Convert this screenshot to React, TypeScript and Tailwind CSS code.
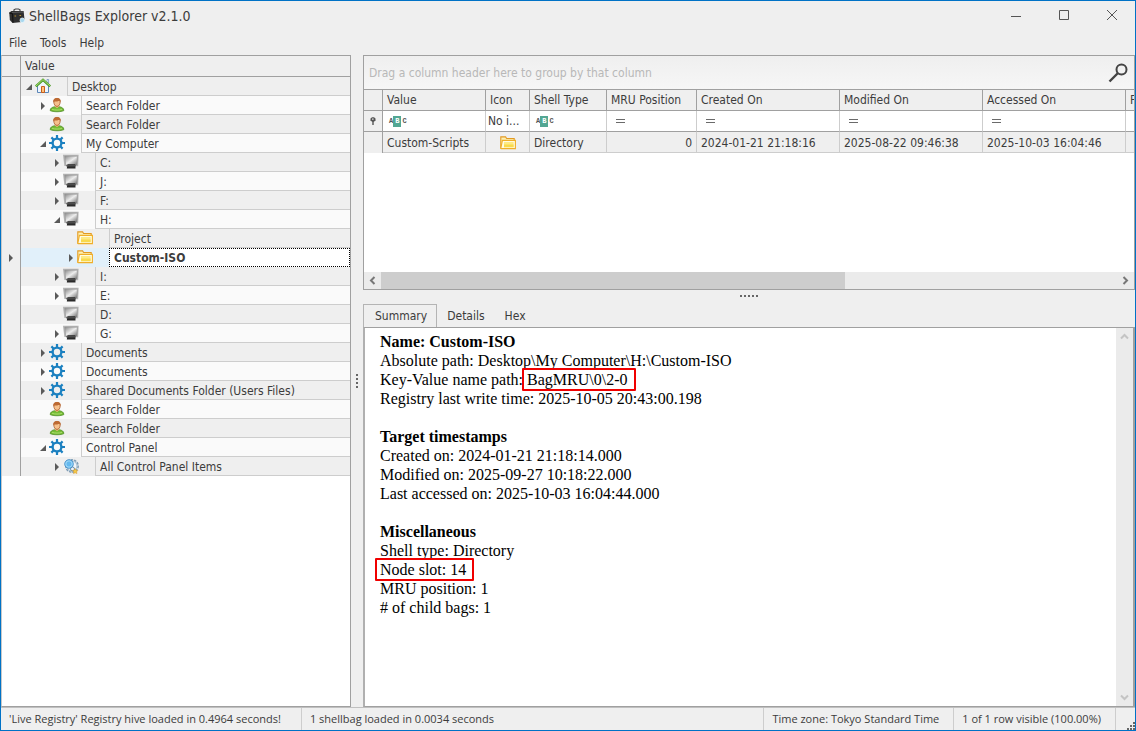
import React, { useState } from 'react';
import type { ReactNode } from 'react';

type IconName = 'home' | 'user' | 'gear' | 'drive' | 'folder' | 'panel';

type TreeNode = {
  label: string;
  level: 0 | 1 | 2 | 3;
  icon: IconName;
  state?: 'open' | 'closed';
  selected?: boolean;
};

const nodes: TreeNode[] = [
  { label: 'Desktop', level: 0, icon: 'home', state: 'open' },
  { label: 'Search Folder', level: 1, icon: 'user', state: 'closed' },
  { label: 'Search Folder', level: 1, icon: 'user' },
  { label: 'My Computer', level: 1, icon: 'gear', state: 'open' },
  { label: 'C:', level: 2, icon: 'drive', state: 'closed' },
  { label: 'J:', level: 2, icon: 'drive', state: 'closed' },
  { label: 'F:', level: 2, icon: 'drive', state: 'closed' },
  { label: 'H:', level: 2, icon: 'drive', state: 'open' },
  { label: 'Project', level: 3, icon: 'folder' },
  { label: 'Custom-ISO', level: 3, icon: 'folder', state: 'closed', selected: true },
  { label: 'I:', level: 2, icon: 'drive', state: 'closed' },
  { label: 'E:', level: 2, icon: 'drive', state: 'closed' },
  { label: 'D:', level: 2, icon: 'drive' },
  { label: 'G:', level: 2, icon: 'drive', state: 'closed' },
  { label: 'Documents', level: 1, icon: 'gear', state: 'closed' },
  { label: 'Documents', level: 1, icon: 'gear', state: 'closed' },
  { label: 'Shared Documents Folder (Users Files)', level: 1, icon: 'gear', state: 'closed' },
  { label: 'Search Folder', level: 1, icon: 'user' },
  { label: 'Search Folder', level: 1, icon: 'user' },
  { label: 'Control Panel', level: 1, icon: 'gear', state: 'open' },
  { label: 'All Control Panel Items', level: 2, icon: 'panel', state: 'closed' },
];

const indent = ['w-[46px]', 'w-[60px]', 'w-[74px]', 'w-[88px]'];

const AppIcon = () => (
  <svg className="h-4 w-4" viewBox="0 0 16 16" aria-hidden="true">
    <path d="M5 4V1.8L6.5 1h3l1.5.8V4" fill="none" stroke="#444" strokeWidth="1.2" />
    <path d="M.3 4.5 2.5 3 14.6 3l.9 8.5L13 14 3.5 15 .8 12z" fill="#2e2e2e" />
    <path d="M3 4.5 14.5 4" stroke="#666" strokeWidth=".8" />
    <path d="M3.5 5.5 4 14.5M.3 5l3.2.8" stroke="#111" />
    <path d="M5.5 7.5h1.6v1H5.5zM10.5 7h1.6v1h-1.6z" fill="#b8912e" />
    <circle cx="13.3" cy="12.3" r="2.3" fill="#a9d8ee" stroke="#e6f5fb" strokeWidth=".8" />
  </svg>
);

const HomeIcon = () => (
  <svg className="h-4 w-4" viewBox="0 0 16 16" aria-hidden="true">
    <path d="M2.5 7.5v7h11v-7L8 2.5z" fill="#eef5fd" stroke="#5b86b8" />
    <path d="M12 1.5h1.6v3.6H12z" fill="#fff" stroke="#5b86b8" strokeWidth=".7" />
    <path d="M.8 8.4 8 1.8l7.2 6.6" fill="none" stroke="#4c9a26" strokeWidth="2.4" />
    <path d="M1 8 8 1.6 15 8" fill="none" stroke="#a5dd70" strokeWidth="1" />
    <path d="M6.5 8.5h3v6h-3z" fill="#fdc07b" stroke="#c75f1c" />
  </svg>
);

const UserIcon = () => (
  <svg className="h-4 w-4" viewBox="0 0 16 16" aria-hidden="true">
    <path d="M1.2 13.6c0-2.4 1.8-3.4 4.6-3.9h4.4c2.8.5 4.6 1.5 4.6 3.9-2.5 1.5-11 1.5-13.6 0z" fill="#77bd35" stroke="#4b8a22" strokeWidth=".8" />
    <path d="M3 12.3c2.5 1 7.5 1 10 0" fill="none" stroke="#a9dc6e" />
    <path d="M5.8 9.5 8 11l2.2-1.5V8H5.8z" fill="#f3bb83" />
    <path d="M4.8 4.6C4.8 2.4 6 1.4 8 1.4s3.2 1 3.2 3.2c0 2.6-1.2 4.8-3.2 4.8S4.8 7.2 4.8 4.6z" fill="#f6c18d" stroke="#a8592a" strokeWidth=".8" />
    <path d="M4.4 5.4C4 2.2 5.8 1 8 1c2.4 0 4 1.2 3.6 4.4-.6-1.4-2-1.6-3.2-1-1.4.6-3-.4-4 1z" fill="#bd6a33" />
  </svg>
);

const GearIcon = () => (
  <svg className="h-4 w-4" viewBox="0 0 16 16" aria-hidden="true">
    <g stroke="#1b80c0" strokeWidth="2.2">
      <path d="M8 0v3.5M8 12.5V16M0 8h3.5M12.5 8H16" />
      <path d="m2.4 2.4 2.3 2.3M11.3 11.3l2.3 2.3M13.6 2.4l-2.3 2.3M4.7 11.3l-2.3 2.3" />
    </g>
    <circle cx="8" cy="8" r="4.4" fill="none" stroke="#1b80c0" strokeWidth="2.4" />
  </svg>
);

const DriveIcon = () => (
  <svg className="h-4 w-4" viewBox="0 0 16 16" aria-hidden="true">
    <defs>
      <linearGradient id="screen" x1="0" y1="0" x2="1" y2="1">
        <stop offset="0" stopColor="#8a8a8a" />
        <stop offset=".5" stopColor="#ededed" />
        <stop offset="1" stopColor="#6e6e6e" />
      </linearGradient>
    </defs>
    <path d="M0 .8h15.6l-.4 11.4L1.4 12z" fill="#b4b4b4" />
    <path d="M1.8 2.2h12.6l-.5 8.8H2.7z" fill="url(#screen)" stroke="#8c8c8c" strokeWidth=".5" />
    <path d="M4.5 10.2h7.8l.2 4.3H3.8z" fill="#2a2a2a" />
    <path d="M3.2 11.2h9.6v1.2H3.2z" fill="#555" />
  </svg>
);

const FolderIcon = () => (
  <svg className="h-4 w-4" viewBox="0 0 16 16" aria-hidden="true">
    <path d="M.8 13.4V1.9h4.8l1 1.6h7.6v2" fill="#fdf0b5" stroke="#e39a22" strokeWidth="1.1" />
    <path d="M.8 13.4 2.4 5.4h13v8.2H1.2z" fill="#fffbe0" stroke="#f0ae28" strokeWidth="1.1" />
    <path d="M4 7h9.6v5.2H4z" fill="#fdea85" />
    <path d="M4 9.5h9.6v2.7H4z" fill="#f9da4c" />
  </svg>
);

const PanelIcon = () => (
  <svg className="h-4 w-4" viewBox="0 0 16 16" aria-hidden="true">
    <circle cx="9" cy="8" r="6.2" fill="#e4edf4" stroke="#7f9db5" strokeWidth="1.5" strokeDasharray="2.4 1" />
    <circle cx="9" cy="8" r="5" fill="#eef4f9" stroke="#8fa9bf" strokeWidth=".8" />
    <circle cx="9.5" cy="11" r="2" fill="none" stroke="#6d8ba3" />
    <circle cx="6" cy="6" r="4.3" fill="#64b8ee" stroke="#3c88c4" strokeWidth=".8" />
    <circle cx="6" cy="6" r="3.2" fill="none" stroke="#a6dbf8" />
    <path d="m12.2 10.6.9 1.6 1.8.3-1.3 1.3.3 1.8-1.7-.8-1.7.8.3-1.8-1.3-1.3 1.8-.3z" fill="#f6c945" stroke="#d3952a" strokeWidth=".5" />
  </svg>
);

const icons: Record<IconName, ReactNode> = {
  home: <HomeIcon />,
  user: <UserIcon />,
  gear: <GearIcon />,
  drive: <DriveIcon />,
  folder: <FolderIcon />,
  panel: <PanelIcon />,
};

const Arrow = ({ open }: { open?: boolean }) => (
  <svg className="h-2 w-1.5" viewBox="0 0 6 8" aria-hidden="true">
    {open ? <path d="M6 1v6H0z" fill="#5a5a5a" /> : <path d="M1 0v8l4-4z" fill="#5a5a5a" />}
  </svg>
);

const TreeRow = ({ node, index }: { node: TreeNode; index: number }) => {
  const stripe = index % 2 === 0 ? 'bg-[#efefef]' : 'bg-[#fafafa]';
  return (
    <div role="treeitem" aria-level={node.level + 1} aria-selected={!!node.selected} className="flex h-[19px]">
      <div className="flex w-[19px] shrink-0 items-center justify-center border-r border-[#a0a0a0] bg-[#efefef]">
        {node.selected && <Arrow />}
      </div>
      <div
        className={`flex shrink-0 items-start justify-end pt-px pr-4 ${indent[node.level]} ${node.selected ? 'bg-[#e1f0fa]' : stripe}`}
      >
        {node.state && (
          <button type="button" aria-label={`Toggle ${node.label}`} className="mt-[5px] mr-[3px] flex">
            <Arrow open={node.state === 'open'} />
          </button>
        )}
        {icons[node.icon]}
      </div>
      {node.selected ? (
        <div className="flex min-w-0 flex-1 items-center border border-dotted border-black bg-white px-1 font-bold">
          {node.label}
        </div>
      ) : (
        <div className={`flex min-w-0 flex-1 items-center border-b border-l border-[#cdcdcd] px-1 pt-px ${stripe}`}>
          {node.label}
        </div>
      )}
    </div>
  );
};

const Tree = () => (
  <section className="flex w-[350px] shrink-0 flex-col border border-[#a0a0a0] border-l-[#c8c8c8] bg-white">
    <div className="flex h-[21px] shrink-0 border-b border-[#a0a0a0] bg-[#efefef]">
      <div className="w-[19px] shrink-0 border-r border-[#a0a0a0]" />
      <div className="flex items-center px-1">Value</div>
    </div>
    <div role="tree" aria-label="Value">
      {nodes.map((node, i) => (
        <TreeRow key={i} node={node} index={i} />
      ))}
    </div>
  </section>
);

const TextFilter = () => (
  <span className="flex items-center px-0.5 font-mono text-[7px] leading-[11px] font-bold text-[#555]">
    A<span className="mr-px block bg-[#53a793] px-[2px] text-white">B</span>C
  </span>
);

const EqualsFilter = () => (
  <svg className="ml-[5px] h-1 w-[9px]" viewBox="0 0 9 4" aria-hidden="true">
    <path d="M0 .5h9M0 3.5h9" stroke="#6a6a6a" />
  </svg>
);

const columns = [
  { name: 'Value', width: 'w-[103px]', filter: <TextFilter />, value: 'Custom-Scripts' },
  { name: 'Icon', width: 'w-[44px]', filter: 'No i...', value: <FolderIcon /> },
  { name: 'Shell Type', width: 'w-[77px]', filter: <TextFilter />, value: 'Directory' },
  { name: 'MRU Position', width: 'w-[90px]', filter: <EqualsFilter />, value: '0' },
  { name: 'Created On', width: 'w-[143px]', filter: <EqualsFilter />, value: '2024-01-21 21:18:16' },
  { name: 'Modified On', width: 'w-[143px]', filter: <EqualsFilter />, value: '2025-08-22 09:46:38' },
  { name: 'Accessed On', width: 'w-[143px]', filter: <EqualsFilter />, value: '2025-10-03 16:04:46' },
  { name: 'First Interacted', width: 'w-[143px]', filter: '', value: '' },
];

const Grid = () => (
  <section className="flex h-[235px] shrink-0 flex-col border border-[#a0a0a0] bg-white">
    <div className="flex h-[34px] shrink-0 items-center justify-between border-b border-[#a0a0a0] bg-linear-to-b from-[#efefef] to-[#f6f6f6] pt-px pr-1.5 pl-[5px] text-[#b8b8b8]">
      Drag a column header here to group by that column
      <button type="button" aria-label="Find">
        <svg className="h-5 w-5" viewBox="0 0 20 20" fill="none" stroke="#444" aria-hidden="true">
          <circle cx="13.5" cy="6.5" r="5" strokeWidth="2" />
          <path d="M10 10 1.5 18.5" strokeWidth="2.4" />
        </svg>
      </button>
    </div>
    <div className="min-h-0 flex-1 overflow-hidden">
      <table className="w-[905px] table-fixed border-separate border-spacing-0 text-left">
        <thead>
          <tr className="h-[21px] bg-[#efefef]">
            <th className="w-[19px] border-r border-b border-[#a0a0a0]" />
            {columns.map((c) => (
              <th key={c.name} className={`border-r border-b border-[#a0a0a0] px-1 py-0 font-normal whitespace-nowrap ${c.width}`}>
                {c.name}
              </th>
            ))}
          </tr>
        </thead>
        <tbody>
          <tr className="h-[21px]">
            <td className="border-r border-b border-[#a0a0a0] bg-[#efefef] p-0">
              <svg className="mx-auto h-2 w-1.5" viewBox="0 0 6 8" aria-hidden="true">
                <path d="M3 4v4" stroke="#555" strokeWidth="1.4" />
                <path d="M.5 1.5 2 .3h2l1.5 1.2v1.7L4 4.8H2L.5 3.2z" fill="#555" />
                <path d="M2 1.6h1.6v1.2H2z" fill="#ddd" />
              </svg>
            </td>
            {columns.map((c) => (
              <td key={c.name} className={`border-r border-b border-r-[#cdcdcd] border-b-[#a0a0a0] py-0 whitespace-nowrap ${c.name === 'Icon' ? 'px-0.5' : 'px-1'}`}>
                {c.filter}
              </td>
            ))}
          </tr>
          <tr className="h-[21px] bg-[#efefef]">
            <td className="border-r border-[#a0a0a0]" />
            {columns.map((c) => (
              <td key={c.name} className="border-r border-b border-[#cdcdcd] px-1 pt-px pb-0 whitespace-nowrap">
                <div className={c.name === 'Icon' ? 'flex justify-center' : c.name === 'MRU Position' ? 'text-right' : ''}>
                  {c.value}
                </div>
              </td>
            ))}
          </tr>
        </tbody>
      </table>
    </div>
    <div className="flex h-[17px] shrink-0 bg-[#ebebeb]">
      <ScrollButton label="Scroll left" path="M6.5 1 3 4.5 6.5 8" color="#777" />
      <div className="flex flex-1">
        <div className="w-[63%] bg-[#cdcdcd]" />
      </div>
      <ScrollButton label="Scroll right" path="M2.5 1 6 4.5 2.5 8" color="#777" />
    </div>
  </section>
);

const ScrollButton = ({ label, path, color }: { label: string; path: string; color: string }) => (
  <button type="button" aria-label={label} className="flex h-[17px] w-[17px] shrink-0 items-center justify-center">
    <svg className="h-[9px] w-[9px]" viewBox="0 0 9 9" fill="none" stroke={color} strokeWidth="2" aria-hidden="true">
      <path d={path} />
    </svg>
  </button>
);

const Marked = ({ children }: { children: ReactNode }) => (
  <span className="relative">
    {children}
    <span className="absolute -inset-y-[3px] -right-2 -left-[5px] rounded-[1px] border-2 border-[#f00000]" />
  </span>
);

const Summary = () => (
  <div className="flex min-h-0 flex-1 border-x-2 border-y border-[#a0a0a0] border-l-[#b0b0b0] bg-white">
    <div className="flex-1 overflow-hidden px-[15px] py-1 font-['Liberation_Serif',serif] text-base leading-[19px] text-black">
      <p className="font-bold">Name: Custom-ISO</p>
      <p>Absolute path: Desktop\My Computer\H:\Custom-ISO</p>
      <p>
        Key-Value name path: <Marked>BagMRU\0\2-0</Marked>
      </p>
      <p>Registry last write time: 2025-10-05 20:43:00.198</p>
      <p className="mt-[19px] font-bold">Target timestamps</p>
      <p>Created on: 2024-01-21 21:18:14.000</p>
      <p>Modified on: 2025-09-27 10:18:22.000</p>
      <p>Last accessed on: 2025-10-03 16:04:44.000</p>
      <p className="mt-[19px] font-bold">Miscellaneous</p>
      <p>Shell type: Directory</p>
      <p>
        <Marked>Node slot: 14</Marked>
      </p>
      <p>MRU position: 1</p>
      <p># of child bags: 1</p>
    </div>
    <div className="flex w-[17px] shrink-0 flex-col justify-between bg-[#ebebeb]">
      <ScrollButton label="Scroll up" path="M1 6.5 4.5 3 8 6.5" color="#c4c4c4" />
      <ScrollButton label="Scroll down" path="M1 2.5 4.5 6 8 2.5" color="#c4c4c4" />
    </div>
  </div>
);

const tabs = ['Summary', 'Details', 'Hex'];

export default function App() {
  const [tab, setTab] = useState('Summary');

  return (
    <div className="flex h-screen flex-col border border-[#0072c6] bg-[#efefef] font-['DejaVu_Sans_Condensed','Noto_Sans',sans-serif] text-xs text-[#3c3c3c]">
      <header className="flex h-[30px] shrink-0 items-center gap-0.5 pl-2">
        <AppIcon />
        <h1 className="ml-0.5 flex-1 text-sm">ShellBags Explorer v2.1.0</h1>
        <button type="button" aria-label="Minimize" className="flex w-[46px] justify-center pb-0.5">
          <svg className="h-[10px] w-[10px]" viewBox="0 0 10 10" stroke="#555" aria-hidden="true">
            <path d="M0 6.5h10" />
          </svg>
        </button>
        <button type="button" aria-label="Maximize" className="flex w-[46px] justify-center pb-0.5">
          <svg className="h-[10px] w-[10px]" viewBox="0 0 10 10" stroke="#555" fill="none" aria-hidden="true">
            <path d="M.5.5h9v9h-9z" />
          </svg>
        </button>
        <button type="button" aria-label="Close" className="flex w-[46px] justify-center pb-0.5">
          <svg className="h-[10px] w-[10px]" viewBox="0 0 10 10" stroke="#555" aria-hidden="true">
            <path d="m0 0 10 10M10 0 0 10" />
          </svg>
        </button>
      </header>

      <nav className="flex h-6 shrink-0 items-center gap-[13px] px-2">
        <button type="button">File</button>
        <button type="button">Tools</button>
        <button type="button">Help</button>
      </nav>

      <main className="flex min-h-0 flex-1">
        <Tree />
        <div className="flex w-3 shrink-0 items-center justify-center">
          <svg className="h-[14px] w-0.5" viewBox="0 0 2 14" aria-hidden="true">
            <path d="M1 0v14" stroke="#666" strokeWidth="2" strokeDasharray="2 2" />
          </svg>
        </div>
        <div className="flex min-w-0 flex-1 flex-col">
          <Grid />
          <div className="flex h-[14px] shrink-0 items-center justify-center pb-0.5">
            <svg className="h-0.5 w-[18px]" viewBox="0 0 18 2" aria-hidden="true">
              <path d="M0 1h18" stroke="#666" strokeWidth="2" strokeDasharray="2 2" />
            </svg>
          </div>
          <div role="tablist" className="flex h-[23px] shrink-0">
            {tabs.map((t) => (
              <button
                key={t}
                type="button"
                role="tab"
                aria-selected={tab === t}
                onClick={() => setTab(t)}
                className={tab === t ? 'border border-b-0 border-[#b4b4b4] pr-[9px] pl-[11px]' : 'px-[10px]'}
              >
                {t}
              </button>
            ))}
          </div>
          <Summary />
        </div>
      </main>

      <footer className="flex h-[23px] shrink-0 items-center border-t border-[#c0c0c0] font-['Open_Sans',sans-serif] text-[11px]">
        <span className="pr-5 pl-2">'Live Registry' Registry hive loaded in 0.4964 seconds!</span>
        <span className="flex h-full flex-1 items-center border-l border-[#cdcdcd] px-2">
          1 shellbag loaded in 0.0034 seconds
        </span>
        <span className="flex h-full items-center border-x border-[#cdcdcd] pr-3.5 pl-2">
          Time zone: Tokyo Standard Time
        </span>
        <span className="pr-3.5 pl-2">1 of 1 row visible (100.00%)</span>
        <span className="flex h-full w-5 items-end justify-end border-l border-[#cdcdcd]">
          <svg className="h-2 w-2" viewBox="0 0 8 8" fill="#666" aria-hidden="true">
            <path d="M6 0h2v2H6zM3 3h2v2H3zM6 3h2v2H6zM0 6h2v2H0zM3 6h2v2H3zM6 6h2v2H6z" />
          </svg>
        </span>
      </footer>
    </div>
  );
}
